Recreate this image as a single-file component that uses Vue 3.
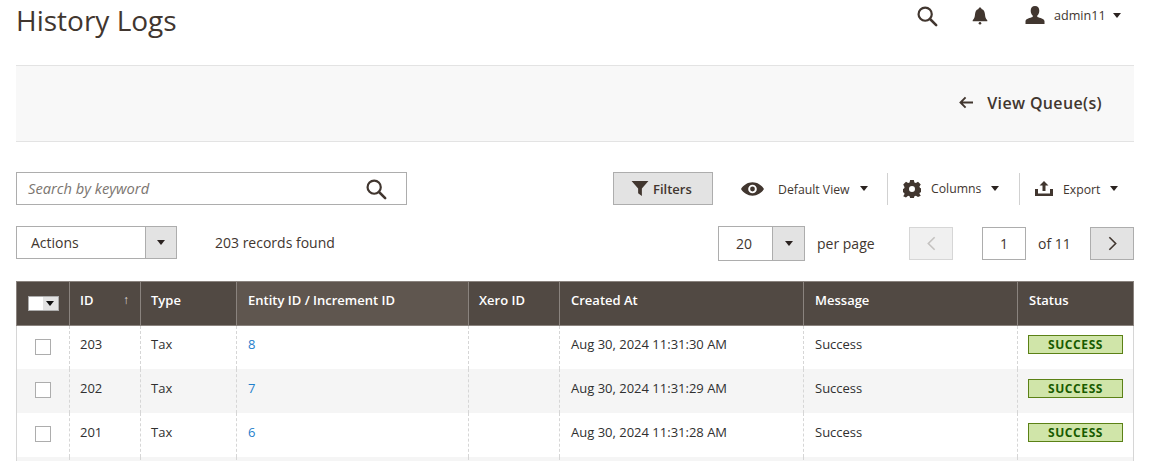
<script setup>
const rows = [
  { id: 203, entity: 8, at: 'Aug 30, 2024 11:31:30 AM' },
  { id: 202, entity: 7, at: 'Aug 30, 2024 11:31:29 AM' },
  { id: 201, entity: 6, at: 'Aug 30, 2024 11:31:28 AM' },
]
</script>

<template>
  <div class="page">
    <header class="top">
      <h1 class="title">History Logs</h1>
      <div class="top-tools">
        <svg class="i-search" viewBox="0 0 24 24"><circle cx="10" cy="10" r="7.2" fill="none" stroke="#41362f" stroke-width="2.4"/><path d="M15.3 15.3 22 22" stroke="#41362f" stroke-width="2.8" stroke-linecap="round"/></svg>
        <svg class="i-bell" viewBox="0 0 16 18"><path d="M8 0.5c.9 0 1.400.6 1.500 1.400C12 2.700 12.800 4.800 13 7.500c.2 2.700.7 4.300 2.300 5.700v1H.7v-1C2.300 11.800 2.800 10.200 3 7.500 3.200 4.800 4 2.700 6.500 1.900 6.600 1.100 7.100.5 8 .5Z" fill="#41362f"/><circle cx="8" cy="16.200" r="1.300" fill="#41362f"/></svg>
        <div class="user">
          <svg viewBox="0 0 20 18" width="20" height="18"><path d="M10 0c2.800 0 4.300 2 4.300 4.700 0 2-.8 3.800-2 4.900v1.500c2.500.8 7 1.700 7.200 4.200V18H.5v-2.700c.2-2.500 4.700-3.400 7.200-4.200V9.600c-1.200-1.100-2-2.900-2-4.900C5.700 2 7.200 0 10 0Z" fill="#41362f"/></svg>
          <span class="user-name">admin11</span>
          <span class="caret small"></span>
        </div>
      </div>
    </header>

    <div class="action-bar">
      <svg viewBox="0 0 16 14" width="15" height="13"><path d="M15 7H2M7 1.500 1.500 7 7 12.500" fill="none" stroke="#41362f" stroke-width="2"/></svg>
      <span class="back-label">View Queue(s)</span>
    </div>

    <div class="toolbar">
      <div class="search">
        <span class="placeholder">Search by keyword</span>
        <svg viewBox="0 0 24 24" width="22" height="22"><circle cx="10" cy="10" r="7.200" fill="none" stroke="#41362f" stroke-width="2.400"/><path d="M15.300 15.300 22 22" stroke="#41362f" stroke-width="2.800" stroke-linecap="round"/></svg>
      </div>
      <div class="tools">
        <button class="filters">
          <svg viewBox="0 0 18 16" width="18" height="15"><path d="M0 0h18L11 8v8L7 13V8Z" fill="#41362f"/></svg>
          Filters
        </button>
        <div class="tool view">
          <svg viewBox="0 0 24 14" width="23" height="14"><path fill-rule="evenodd" d="M12 0c5 0 9.500 3 12 7-2.500 4-7 7-12 7S2.500 11 0 7c2.500-4 7-7 12-7Zm0 2.500a4.500 4.500 0 1 0 0 9 4.500 4.500 0 0 0 0-9Zm0 2a2.500 2.500 0 1 1 0 5 2.500 2.500 0 0 1 0-5Z" fill="#41362f"/></svg>
          <span class="tool-label">Default View</span>
          <span class="caret"></span>
        </div>
        <div class="tool columns">
          <svg viewBox="0 0 24 24" width="18" height="18"><path fill-rule="evenodd" d="M9.500 0h5l.7 3.300 2 .8L20 2.300 23.700 6l-1.800 2.800.8 2 3.300.7H24v5l-1.300-.2-.8 2 1.800 2.800-3.700 1.700-2.800-1.800-2 .8-.7 2.200h-5l-.7-2.200-2-.8L4 23.200.3 21.500l1.800-2.800-.8-2L0 16.500v-5l1.300.3.800-2L.3 6 4 2.300l2.800 1.800 2-.8ZM12 8a4 4 0 1 0 0 8 4 4 0 0 0 0-8Z" fill="#41362f"/></svg>
          <span class="tool-label">Columns</span>
          <span class="caret"></span>
        </div>
        <div class="tool export">
          <svg viewBox="0 0 18 15" width="18" height="15"><path d="M9 0l4.500 4.500H10.500V10h-3V4.500H4.500Z" fill="#41362f"/><path d="M0 8h3v4.500h12V8h3v7H0Z" fill="#41362f"/></svg>
          <span class="tool-label">Export</span>
          <span class="caret"></span>
        </div>
      </div>
    </div>

    <div class="toolbar second">
      <div class="left">
        <div class="actions">
          <span class="actions-label">Actions</span>
          <span class="drop narrow"><span class="caret"></span></span>
        </div>
        <span class="records">203 records found</span>
      </div>
      <div class="pager">
        <div class="perpage">
          <span class="perpage-value">20</span>
          <span class="drop"><span class="caret"></span></span>
        </div>
        <span class="per-label">per page</span>
        <button class="page-btn disabled">
          <svg viewBox="0 0 10 16" width="9" height="15"><path d="M8.500 1 1.500 8l7 7" fill="none" stroke="#c4c2c0" stroke-width="1.800"/></svg>
        </button>
        <span class="page-input">1</span>
        <span class="of">of 11</span>
        <button class="page-btn">
          <svg viewBox="0 0 10 16" width="9" height="15"><path d="M1.500 1l7 7-7 7" fill="none" stroke="#41362f" stroke-width="1.800"/></svg>
        </button>
      </div>
    </div>

    <table class="grid">
      <colgroup>
        <col class="c1" /><col class="c2" /><col class="c3" /><col class="c4" />
        <col class="c5" /><col class="c6" /><col class="c7" /><col class="c8" />
      </colgroup>
      <thead>
        <tr>
          <th class="check-head">
            <span class="multi"><span class="multi-box"></span><span class="multi-drop"><span class="caret tiny"></span></span></span>
          </th>
          <th><span class="id-head">ID<span class="arrow">↑</span></span></th>
          <th>Type</th>
          <th class="hover shift">Entity ID / Increment ID</th>
          <th>Xero ID</th>
          <th class="shift">Created At</th>
          <th class="shift">Message</th>
          <th class="shift">Status</th>
        </tr>
      </thead>
      <tbody>
        <tr v-for="(r, i) in rows" :key="r.id" :class="{ alt: i % 2 === 1 }">
          <td class="check-cell"><span class="checkbox"></span></td>
          <td>{{ r.id }}</td>
          <td>Tax</td>
          <td class="shift"><a class="link">{{ r.entity }}</a></td>
          <td></td>
          <td class="shift">{{ r.at }}</td>
          <td class="shift">Success</td>
          <td class="status-cell"><span class="badge">SUCCESS</span></td>
        </tr>
        <tr class="alt">
          <td></td><td></td><td></td><td></td><td></td><td></td><td></td><td></td>
        </tr>
      </tbody>
    </table>
  </div>
</template>

<style>
html, body { margin: 0; height: 461px; overflow: hidden; background: #fff; }
</style>

<style scoped>
.page {
  width: 1118px;
  margin-left: 16px;
  font-family: "Open Sans", sans-serif;
  color: #41362f;
  font-size: 14px;
}
.top {
  height: 65px;
  display: flex;
  justify-content: space-between;
  align-items: flex-start;
}
.title {
  margin: 0;
  font-size: 28px;
  line-height: 40px;
  font-weight: 400;
  color: #41362f;
}
.top-tools {
  display: flex;
  align-items: center;
  height: 32px;
  width: 217px;
  margin-right: 1px;
}
.i-search { width: 22px; height: 22px; flex: none; }
.i-bell { margin-left: 34px; width: 16px; height: 18px; flex: none; }
.user { display: flex; align-items: center; margin-left: 37px; margin-top: -2px; white-space: nowrap; }
.user-name { font-size: 12.600px; margin-left: 9px; }
.caret {
  display: inline-block;
  flex: none;
  width: 0;
  height: 0;
  border-left: 4.500px solid transparent;
  border-right: 4.500px solid transparent;
  border-top: 5px solid #2b2320;
}
.caret.small { margin-left: 7px; }
.caret.tiny { border-left-width: 4px; border-right-width: 4px; border-top-width: 5px; }

.action-bar {
  background: #f8f8f8;
  border-top: 1px solid #e3e3e3;
  border-bottom: 1px solid #e3e3e3;
  display: flex;
  align-items: center;
  justify-content: flex-end;
  padding-right: 32px;
  padding-bottom: 2px;
  height: 73px;
}
.back-label { font-size: 16px; font-weight: 600; margin-left: 13px; letter-spacing: .35px; }

.toolbar {
  display: flex;
  justify-content: space-between;
  align-items: center;
  margin-top: 30px;
  height: 33px;
}
.search {
  width: 391px;
  height: 33px;
  box-sizing: border-box;
  border: 1px solid #adadad;
  display: flex;
  align-items: center;
  justify-content: space-between;
  padding: 0 19px 0 11px;
}
.placeholder { font-style: italic; color: #7b7570; font-size: 14.700px; padding-bottom: 2px; }
.tools { display: flex; align-items: center; }
.filters {
  width: 100px;
  height: 33px;
  box-sizing: border-box;
  background: #e3e3e3;
  border: 1px solid #adadad;
  font: 600 13px "Open Sans", sans-serif;
  color: #41362f;
  display: flex;
  align-items: center;
  justify-content: flex-start;
  gap: 4px;
  padding: 0 0 0 17px;
}
.tool { display: flex; align-items: center; height: 32px; font-size: 12.250px; box-sizing: border-box; white-space: nowrap; }
.tool .caret { margin-left: 10px; }
.tool-label { color: #41362f; }
.view { width: 175px; padding-left: 28px; border-right: 1px solid #d1d1d1; }
.view .tool-label { margin-left: 14px; padding-top: 1px; }
.columns { width: 132px; padding-left: 15px; border-right: 1px solid #d1d1d1; }
.columns .tool-label { margin-left: 10px; }
.export { width: 114px; padding-left: 15px; }
.export .tool-label { margin-left: 10px; padding-top: 1px; }

.second { margin-top: 21px; height: 35px; align-items: flex-start; }
.left { display: flex; align-items: center; height: 33px; }
.actions {
  width: 161px;
  height: 33px;
  box-sizing: border-box;
  border: 1px solid #adadad;
  display: flex;
  align-items: center;
  justify-content: space-between;
}
.actions-label { padding-left: 14px; }
.drop {
  width: 31px;
  align-self: stretch;
  background: #e3e3e3;
  border-left: 1px solid #adadad;
  display: flex;
  align-items: center;
  justify-content: center;
}
.drop.narrow { width: 30px; }
.records { margin-left: 38px; }
.pager { display: flex; align-items: center; height: 35px; }
.perpage {
  width: 87px;
  height: 35px;
  box-sizing: border-box;
  border: 1px solid #adadad;
  display: flex;
  align-items: center;
  justify-content: space-between;
}
.perpage-value { padding-left: 17px; }
.per-label { margin-left: 12px; width: 58px; }
.page-btn {
  width: 44px;
  height: 33px;
  box-sizing: border-box;
  background: #e3e3e3;
  border: 1px solid #adadad;
  display: flex;
  align-items: center;
  justify-content: center;
  padding: 0;
}
.page-btn.disabled { background: #f0f0f0; border-color: #d6d6d6; margin-left: 34px; }
.page-input {
  width: 44px;
  height: 33px;
  box-sizing: border-box;
  border: 1px solid #adadad;
  margin-left: 29px;
  display: flex;
  align-items: center;
  justify-content: center;
}
.of { margin-left: 12px; width: 52px; }

.grid {
  margin-top: 20px;
  width: 1117px;
  border-collapse: collapse;
  table-layout: fixed;
  font-size: 13px;
}
.c1 { width: 53px; }
.c2 { width: 71px; }
.c3 { width: 96px; }
.c4 { width: 232px; }
.c5 { width: 91px; }
.c6 { width: 244px; }
.c7 { width: 214px; }
.c8 { width: 116px; }
th {
  height: 44px;
  box-sizing: border-box;
  background: #514943;
  color: #fff;
  font-weight: 600;
  text-align: left;
  padding: 0 10px 8px;
  border: 1px solid #8a837e;
}
th.hover { background: #5f564f; }
td {
  height: 44px;
  box-sizing: border-box;
  padding: 0 10px 5px;
  border-left: 1px dashed #d6d6d6;
  border-right: 1px dashed #d6d6d6;
  color: #303030;
}
tbody tr:first-child td { height: 43px; padding-bottom: 7px; }
th.shift, td.shift { padding-left: 11px; }
td:first-child { border-left: 1px solid #d6d6d6; }
td:last-child { border-right: 1px solid #d6d6d6; }
tr.alt td { background: #f5f5f5; }
th.check-head { text-align: center; padding: 0 0 4px; }
td.check-cell { text-align: center; padding: 0 0 4px; }
tbody tr:first-child td.check-cell { padding-bottom: 4px; }
.multi { display: inline-flex; width: 31px; height: 15px; vertical-align: middle; border: 1px solid #adadad; box-sizing: border-box; }
.multi-box { flex: 1; background: #fff; }
.multi-drop { width: 15px; background: #e3e3e3; display: flex; align-items: center; justify-content: center; }
.multi-drop .caret { border-top-color: #111; }
.id-head { display: flex; justify-content: space-between; align-items: center; }
.arrow { font-size: 12px; font-weight: 400; color: #dcdad8; margin-right: 1px; }
.checkbox {
  display: inline-block;
  width: 16px;
  height: 16px;
  box-sizing: border-box;
  border: 1px solid #adadad;
  background: #fff;
  vertical-align: middle;
}
.link { color: #1f80cc; }
td.status-cell { padding: 0 10px 5px 10px; }
tbody tr:first-child td.status-cell { padding-bottom: 6px; }
.badge {
  display: block;
  height: 19px;
  box-sizing: border-box;
  background: #d0e5a9;
  border: 1px solid #5b8116;
  color: #185b00;
  font-weight: 700;
  font-size: 12px;
  line-height: 18px;
  text-align: center;
  letter-spacing: .6px;
}
</style>
